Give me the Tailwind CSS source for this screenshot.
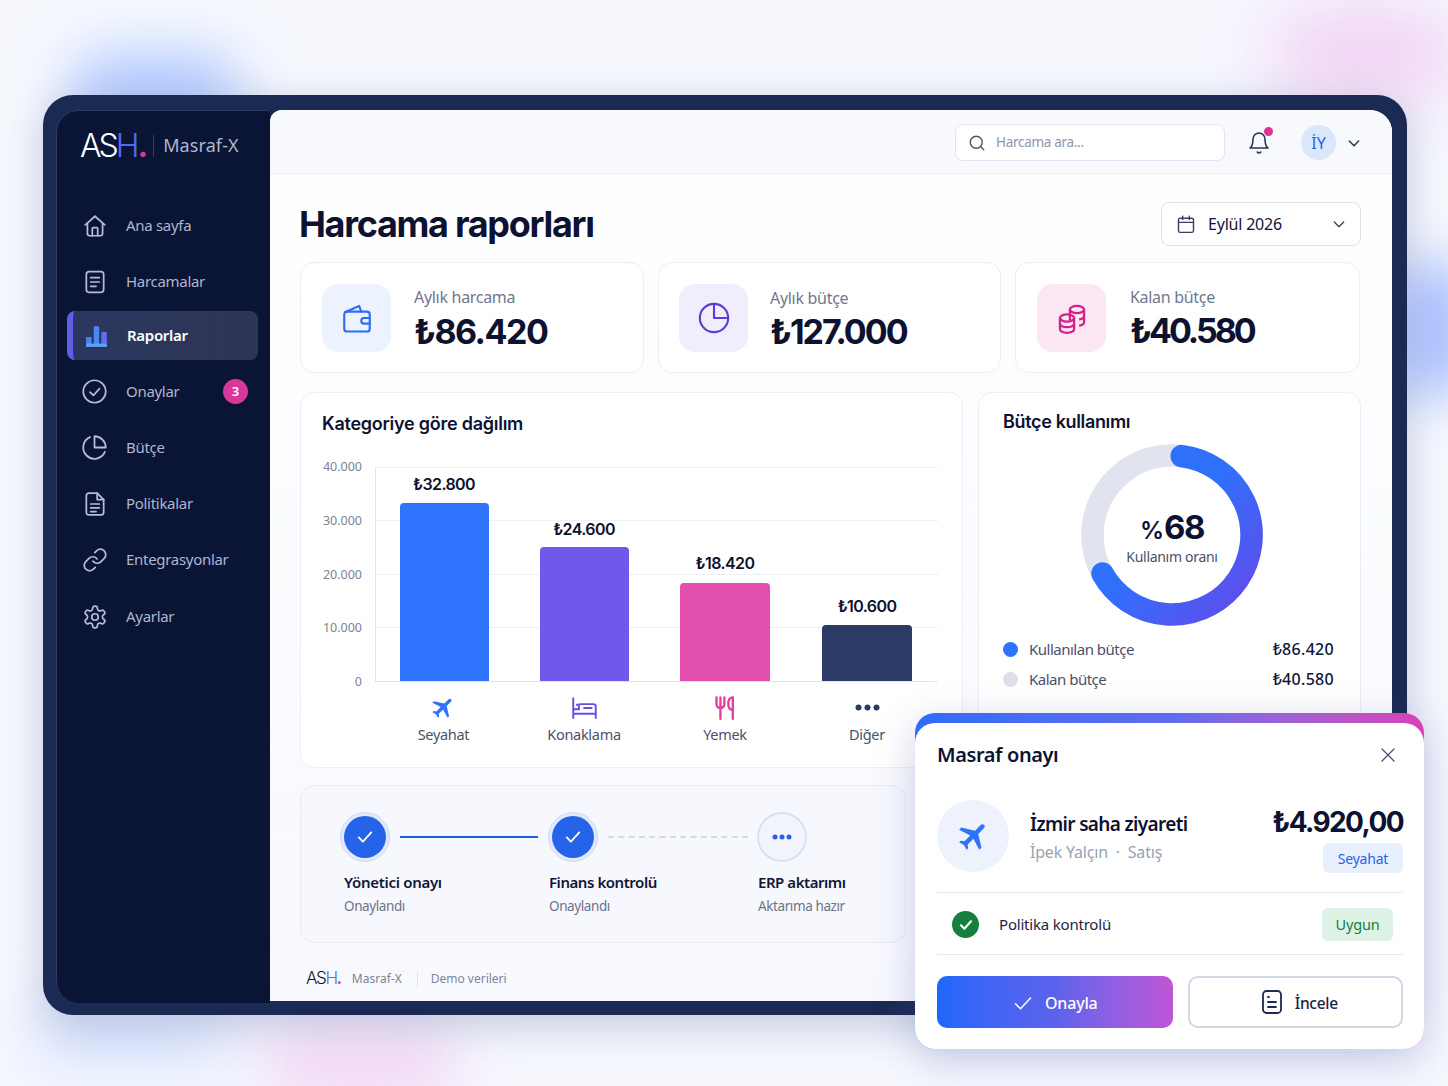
<!DOCTYPE html>
<html lang="tr">
<head>
    <meta charset="UTF-8">
    <title>Masraf-X Harcama raporları</title>
    <script src="https://cdn.jsdelivr.net/npm/@tailwindcss/browser@4"></script>
</head>
<body class="bg-[#f6f8fe] font-['Noto_Sans',sans-serif] text-[#0f1638]">
<div class="relative w-[1448px] h-[1086px] overflow-hidden pt-[95px] pl-[43px]">
    <!-- Background glow -->
    <div class="absolute left-[70px] top-[55px] w-[170px] h-[70px] rounded-full bg-[#8fb2ff]/70 blur-[28px]"></div>
    <div class="absolute left-[1270px] top-[10px] w-[190px] h-[90px] rounded-full bg-[#efb8ee]/60 blur-[35px]"></div>
    <div class="absolute left-[1390px] top-[260px] w-[90px] h-[140px] rounded-full bg-[#9db8ff]/80 blur-[25px]"></div>
    <div class="absolute left-[260px] top-[1030px] w-[200px] h-[70px] rounded-full bg-[#f0c0ee]/60 blur-[30px]"></div>
    <div class="absolute left-[30px] top-[1005px] w-[200px] h-[60px] rounded-full bg-[#aac4ff]/40 blur-[30px]"></div>

    <!-- App frame -->
    <div class="relative flex w-[1364px] h-[920px] rounded-[30px] bg-[#1b2a52] pt-[15px] pr-[15px] pb-[12px] pl-[13px] shadow-[0_10px_40px_rgba(40,60,130,0.25)]">

        <!-- Sidebar -->
        <aside class="w-[214px] shrink-0 rounded-l-[22px] bg-[#0a1434] border-l border-t border-[#2a3a66]">
            <div class="flex items-center h-[69px] pl-[23px]">
                <span class="font-['Inter',sans-serif] text-[32px] leading-none tracking-[-3px] font-light text-white">AS<span class="text-[#4f6cf5]">H</span><span class="ml-[1px] text-[#d9379a] font-bold">.</span></span>
                <span class="ml-[8px] w-px h-[22px] bg-[#34405f]"></span>
                <span class="ml-[9px] text-[18px] text-[#aeb6cf] tracking-[0.1px]">Masraf-X</span>
            </div>
            <nav class="flex flex-col gap-[7px] mt-[21px] pl-[10px] pr-[12px] text-[15px] text-[#aeb6d0]">
                <a class="flex items-center h-[49px] pl-[15px] gap-[18px]">
                    <svg class="w-[26px] h-[26px]" viewBox="0 0 24 24" fill="none" stroke="#b4bcd6" stroke-width="1.6" stroke-linejoin="round" stroke-linecap="round"><path d="M3 11l9-8 9 8"/><path d="M5 9.5V19a2 2 0 0 0 2 2h10a2 2 0 0 0 2-2V9.5"/><path d="M9.5 21v-6.5a1 1 0 0 1 1-1h3a1 1 0 0 1 1 1V21"/></svg>
                    <span class="tracking-[-0.3px]">Ana sayfa</span>
                </a>
                <a class="flex items-center h-[49px] pl-[15px] gap-[18px]">
                    <svg class="w-[26px] h-[26px]" viewBox="0 0 24 24" fill="none" stroke="#b4bcd6" stroke-width="1.6" stroke-linecap="round"><rect x="4" y="2.5" width="16" height="19" rx="2.5"/><path d="M8 8h8M8 12h8M8 16h5"/></svg>
                    <span class="tracking-[-0.3px]">Harcamalar</span>
                </a>
                <a class="flex items-center h-[49px] -mt-[2px] pl-[11px] gap-[17px] rounded-[8px] border-l-[6px] border-[#5f60ea] bg-gradient-to-r from-[#2b3760] to-[#2d3555] text-white font-semibold">
                    <svg class="w-[26px] h-[26px]" viewBox="0 0 24 24"><rect x="2" y="13" width="5" height="9" fill="#3f8bf5"/><rect x="9" y="3" width="5" height="19" rx="1" fill="#4a86f5"/><rect x="16" y="8" width="5" height="14" rx="1" fill="#5f6df0"/><rect x="2" y="19" width="19" height="3" fill="#65a0f8"/></svg>
                    <span class="tracking-[-0.3px]">Raporlar</span>
                </a>
                <a class="flex items-center h-[49px] pl-[14px] gap-[18px]">
                    <svg class="w-[27px] h-[27px]" viewBox="0 0 24 24" fill="none" stroke="#b4bcd6" stroke-width="1.5" stroke-linecap="round" stroke-linejoin="round"><circle cx="12" cy="12" r="10"/><path d="M8 12.5l3 3 5.5-6"/></svg>
                    <span class="tracking-[-0.3px]">Onaylar</span>
                    <span class="ml-auto mr-[10px] flex items-center justify-center w-[25px] h-[25px] rounded-full bg-[#d9379a] text-white text-[13px] font-semibold">3</span>
                </a>
                <a class="flex items-center h-[49px] pl-[14px] gap-[18px]">
                    <svg class="w-[27px] h-[27px]" viewBox="0 0 24 24" fill="none" stroke="#b4bcd6" stroke-width="1.6" stroke-linecap="round" stroke-linejoin="round"><path d="M21.21 15.89A10 10 0 1 1 8 2.83"/><path d="M22 12A10 10 0 0 0 12 2v10z"/></svg>
                    <span class="tracking-[-0.3px]">Bütçe</span>
                </a>
                <a class="flex items-center h-[49px] pl-[15px] gap-[18px]">
                    <svg class="w-[26px] h-[26px]" viewBox="0 0 24 24" fill="none" stroke="#b4bcd6" stroke-width="1.6" stroke-linecap="round" stroke-linejoin="round"><path d="M14 2H6.5A2.5 2.5 0 0 0 4 4.5v15A2.5 2.5 0 0 0 6.5 22h11a2.5 2.5 0 0 0 2.5-2.5V8z"/><path d="M14 2v6h6"/><path d="M8 12h8M8 15.5h8M8 19h5"/></svg>
                    <span class="tracking-[-0.3px]">Politikalar</span>
                </a>
                <a class="flex items-center h-[49px] pl-[15px] gap-[18px]">
                    <svg class="w-[26px] h-[26px]" viewBox="0 0 24 24" fill="none" stroke="#b4bcd6" stroke-width="1.6" stroke-linecap="round" stroke-linejoin="round"><path d="M10 13a5 5 0 0 0 7.54.54l3-3a5 5 0 0 0-7.07-7.07l-1.72 1.71"/><path d="M14 11a5 5 0 0 0-7.54-.54l-3 3a5 5 0 0 0 7.07 7.07l1.71-1.71"/></svg>
                    <span class="tracking-[-0.3px]">Entegrasyonlar</span>
                </a>
                <a class="flex items-center h-[49px] mt-[1px] pl-[15px] gap-[18px]">
                    <svg class="w-[26px] h-[26px]" viewBox="0 0 24 24" fill="none" stroke="#b4bcd6" stroke-width="1.6" stroke-linecap="round" stroke-linejoin="round"><path d="M12.22 2h-.44a2 2 0 0 0-2 2v.18a2 2 0 0 1-1 1.73l-.43.25a2 2 0 0 1-2 0l-.15-.08a2 2 0 0 0-2.73.73l-.22.38a2 2 0 0 0 .73 2.73l.15.1a2 2 0 0 1 1 1.72v.51a2 2 0 0 1-1 1.74l-.15.09a2 2 0 0 0-.73 2.73l.22.38a2 2 0 0 0 2.73.73l.15-.08a2 2 0 0 1 2 0l.43.25a2 2 0 0 1 1 1.73V20a2 2 0 0 0 2 2h.44a2 2 0 0 0 2-2v-.18a2 2 0 0 1 1-1.73l.43-.25a2 2 0 0 1 2 0l.15.08a2 2 0 0 0 2.73-.73l.22-.39a2 2 0 0 0-.73-2.73l-.15-.08a2 2 0 0 1-1-1.74v-.5a2 2 0 0 1 1-1.74l.15-.09a2 2 0 0 0 .73-2.73l-.22-.38a2 2 0 0 0-2.73-.73l-.15.08a2 2 0 0 1-2 0l-.43-.25a2 2 0 0 1-1-1.73V4a2 2 0 0 0-2-2z"/><circle cx="12" cy="12" r="3"/></svg>
                    <span class="tracking-[-0.3px]">Ayarlar</span>
                </a>
            </nav>
        </aside>

        <!-- Main panel -->
        <main class="flex-1 min-w-0 rounded-tl-[12px] rounded-tr-[22px] mb-[2px] bg-gradient-to-b from-white to-[#f8f9fe] overflow-hidden">
            <header class="flex items-center h-[64px] pt-[2px] pl-[685px] border-b border-[#e9ecf4] bg-[#f8f9fd]">
                <div class="flex items-center w-[270px] h-[37px] pl-[12px] gap-[10px] rounded-[8px] border border-[#e2e5ef] bg-white text-[13.5px] text-[#8f96ab] tracking-[-0.3px]">
                    <svg class="w-[18px] h-[18px]" viewBox="0 0 24 24" fill="none" stroke="#4b5268" stroke-width="1.8" stroke-linecap="round"><circle cx="11" cy="11" r="8"/><path d="M21 21l-4.3-4.3"/></svg>
                    Harcama ara...
                </div>
                <div class="relative ml-[22px] w-[24px] h-[24px]">
                    <svg class="w-[24px] h-[24px]" viewBox="0 0 24 24" fill="none" stroke="#2b3350" stroke-width="1.6" stroke-linecap="round" stroke-linejoin="round"><path d="M6 8a6 6 0 0 1 12 0c0 7 3 9 3 9H3s3-2 3-9"/><path d="M10.3 21a1.94 1.94 0 0 0 3.4 0"/></svg>
                    <span class="absolute right-[-2px] top-[-4px] w-[9px] h-[9px] rounded-full bg-[#e0338f]"></span>
                </div>
                <div class="ml-[30px] flex items-center justify-center w-[35px] h-[35px] rounded-full bg-[#dbe7fb] text-[#2563eb] text-[16px]">İY</div>
                <svg class="ml-[10px] w-[16px] h-[16px]" viewBox="0 0 24 24" fill="none" stroke="#2b3350" stroke-width="2.2" stroke-linecap="round" stroke-linejoin="round"><path d="M5 9l7 7 7-7"/></svg>
            </header>

            <div class="pl-[30px] pr-[31px]">
                <div class="flex items-center justify-between pt-[28px]">
                    <h1 class="-ml-[1px] font-['Inter',sans-serif] text-[36px] leading-[44px] font-bold tracking-[-1.3px] text-[#0d1230]">Harcama raporları</h1>
                    <div class="flex items-center w-[200px] h-[44px] pl-[14px] rounded-[8px] border border-[#d9deea] bg-white text-[16px] text-[#0f1638]">
                        <svg class="w-[20px] h-[20px]" viewBox="0 0 24 24" fill="none" stroke="#3a4260" stroke-width="1.7" stroke-linecap="round"><rect x="3" y="5" width="18" height="17" rx="2"/><path d="M3 10h18M8 2.5v4M16 2.5v4"/></svg>
                        <span class="ml-[12px] tracking-[-0.2px]">Eylül 2026</span>
                        <svg class="ml-auto mr-[13px] w-[16px] h-[16px]" viewBox="0 0 24 24" fill="none" stroke="#3a4260" stroke-width="2" stroke-linecap="round" stroke-linejoin="round"><path d="M5 9l7 7 7-7"/></svg>
                    </div>
                </div>

                <!-- Stat cards -->
                <div class="grid grid-cols-[344px_343px_345px] gap-[14px] mt-[16px]">
                    <div class="flex items-center h-[111px] pl-[21px] rounded-[14px] border border-[#eceef5] bg-white">
                        <div class="flex items-center justify-center w-[69px] h-[68px] rounded-[16px] bg-[#edf3fe]">
                            <svg class="w-[34px] h-[34px]" viewBox="0 0 24 24" fill="none" stroke="#2b6ef5" stroke-width="1.5" stroke-linecap="round" stroke-linejoin="round"><path d="M3 9.5a2 2 0 0 1 2-2h14a2 2 0 0 1 2 2v10a2 2 0 0 1-2 2H5a2 2 0 0 1-2-2z"/><path d="M3.5 8l10-4.5 1.5 4"/><path d="M21 12h-4a2 2 0 0 0 0 4h4"/></svg>
                        </div>
                        <div class="ml-[23px] mt-[5px]">
                            <div class="text-[16px] leading-[22px] text-[#71768f] tracking-[-0.3px]">Aylık harcama</div>
                            <div class="mt-[2px] font-['Inter',sans-serif] text-[34px] leading-[44px] font-bold tracking-[-1.5px] text-[#0d1230]">₺86.420</div>
                        </div>
                    </div>
                    <div class="flex items-center h-[111px] pl-[20px] rounded-[14px] border border-[#eceef5] bg-white">
                        <div class="flex items-center justify-center w-[69px] h-[68px] rounded-[16px] bg-[#f0eefc]">
                            <svg class="w-[34px] h-[34px]" viewBox="0 0 24 24" fill="none" stroke="#5f3bd8" stroke-width="1.5" stroke-linejoin="round"><circle cx="12" cy="12" r="10"/><path d="M12 2v10h10"/></svg>
                        </div>
                        <div class="ml-[22px] mt-[5px]">
                            <div class="text-[16px] leading-[22px] text-[#71768f] tracking-[-0.3px]">Aylık bütçe</div>
                            <div class="mt-[1px] font-['Inter',sans-serif] text-[34px] leading-[44px] font-bold tracking-[-2px] text-[#0d1230]">₺127.000</div>
                        </div>
                    </div>
                    <div class="flex items-center h-[111px] pl-[21px] rounded-[14px] border border-[#eceef5] bg-white">
                        <div class="flex items-center justify-center w-[69px] h-[68px] rounded-[16px] bg-[#fce6f3]">
                            <svg class="w-[34px] h-[34px]" viewBox="0 0 24 24" fill="none" stroke="#d0228a" stroke-width="1.6"><ellipse cx="15.5" cy="6" rx="5" ry="2.6"/><path d="M10.5 6v7.5M20.5 6v9c0 1-1 2-3.5 2.4M20.5 10.5c0 1-1 2-3.5 2.4"/><ellipse cx="8.5" cy="12" rx="5" ry="2.6"/><path d="M3.5 12v8c0 1.4 2.2 2.5 5 2.5s5-1.1 5-2.5v-8M3.5 16c0 1.4 2.2 2.5 5 2.5s5-1.1 5-2.5"/></svg>
                        </div>
                        <div class="ml-[24px] mt-[3px]">
                            <div class="text-[16px] leading-[22px] text-[#71768f] tracking-[-0.3px]">Kalan bütçe</div>
                            <div class="mt-[1px] font-['Inter',sans-serif] text-[34px] leading-[44px] font-bold tracking-[-3px] text-[#0d1230]">₺40.580</div>
                        </div>
                    </div>
                </div>

                <!-- Charts -->
                <div class="grid grid-cols-[663px_383px] gap-[15px] mt-[19px]">
                    <section class="h-[376px] pl-[21px] pt-[18px] rounded-[14px] border border-[#eceef5] bg-white">
                        <h2 class="font-['Inter',sans-serif] text-[18px] leading-[26px] font-semibold tracking-[-0.25px] text-[#0d1230]">Kategoriye göre dağılım</h2>
                        <div class="flex mt-[30px]">
                            <div class="flex flex-col justify-between items-end w-[40px] h-[231px] -mt-[8px] text-[12.5px] leading-[16px] text-[#7d8398]">
                                <span>40.000</span><span>30.000</span><span>20.000</span><span>10.000</span><span>0</span>
                            </div>
                            <div class="ml-[13px] w-[563px]">
                                <div class="relative h-[215px] border-l border-b border-[#dfe3ee]">
                                    <div class="absolute inset-0 flex flex-col justify-between">
                                        <div class="h-px bg-[#eef0f6]"></div><div class="h-px bg-[#eef0f6]"></div><div class="h-px bg-[#eef0f6]"></div><div class="h-px bg-[#eef0f6]"></div><div class="h-px"></div>
                                    </div>
                                    <div class="relative flex items-end h-full -ml-[2px] font-['Inter',sans-serif] text-[16px] leading-[22px] font-semibold tracking-[-0.6px] text-[#0d1230]">
                                        <div class="flex flex-col items-center w-[140px]"><span class="mb-[8px]">₺32.800</span><div class="w-[89px] h-[178px] rounded-t-[4px] bg-[#2f72fb]"></div></div>
                                        <div class="flex flex-col items-center w-[140px]"><span class="mb-[7px]">₺24.600</span><div class="w-[89px] h-[134px] rounded-t-[4px] bg-[#7058ea]"></div></div>
                                        <div class="flex flex-col items-center w-[142px]"><span class="mb-[9px]">₺18.420</span><div class="w-[90px] h-[98px] rounded-t-[4px] bg-[#e24fae]"></div></div>
                                        <div class="flex flex-col items-center w-[142px]"><span class="mb-[8px]">₺10.600</span><div class="w-[90px] h-[56px] rounded-t-[4px] bg-[#2c3a66]"></div></div>
                                    </div>
                                </div>
                                <div class="flex -ml-[1px] mt-[12px] text-[14.5px] leading-[20px] text-[#4b5168] tracking-[-0.3px]">
                                    <div class="flex flex-col items-center w-[140px] pr-[1px]">
                                        <svg class="w-[27px] h-[27px]" viewBox="0 0 24 24" fill="#2f72fb"><path transform="rotate(45 12 12)" d="M21 16v-2l-8-5V3.5c0-.83-.67-1.5-1.5-1.5S10 2.67 10 3.5V9l-8 5v2l8-2.5V19l-2 1.5V22l3.5-1 3.5 1v-1.5L13 19v-5.5l8 2.5z"/></svg>
                                        <span class="mt-[3px]">Seyahat</span>
                                    </div>
                                    <div class="flex flex-col items-center w-[140px]">
                                        <svg class="w-[27px] h-[27px]" viewBox="0 0 24 24" fill="none" stroke="#6450e0" stroke-width="1.7"><path d="M2 3v19M2 17.5h20M22 22v-11a2 2 0 0 0-2-2H8a1 1 0 0 0-1 1v3.5H2"/><path d="M4.500 9.500h2M11 12.500h8"/></svg>
                                        <span class="mt-[3px]">Konaklama</span>
                                    </div>
                                    <div class="flex flex-col items-center w-[142px]">
                                        <svg class="w-[27px] h-[27px]" viewBox="0 0 24 24" fill="none" stroke="#e0409f" stroke-width="2.1" stroke-linecap="round"><path d="M4 3v6a3.500 3.500 0 0 0 7 0V3M7.500 3v19"/><path d="M18 14c-2.500 0-3.500-2-3.500-5.500S16 3 18.500 3v19"/></svg>
                                        <span class="mt-[3px]">Yemek</span>
                                    </div>
                                    <div class="flex flex-col items-center w-[142px]">
                                        <svg class="w-[27px] h-[27px]" viewBox="0 0 27 27" fill="#2c3a66"><circle cx="4.500" cy="13.500" r="3"/><circle cx="13.500" cy="13.500" r="3"/><circle cx="22.500" cy="13.500" r="3"/></svg>
                                        <span class="mt-[3px]">Diğer</span>
                                    </div>
                                </div>
                            </div>
                        </div>
                    </section>

                    <section class="h-[376px] pl-[24px] pr-[26px] pt-[16px] rounded-[14px] border border-[#eceef5] bg-white">
                        <h2 class="font-['Inter',sans-serif] text-[18px] leading-[26px] font-semibold tracking-[-0.35px] text-[#0d1230]">Bütçe kullanımı</h2>
                        <div class="relative w-[182px] h-[182px] ml-[78px] mt-[9px]">
                            <svg class="w-[182px] h-[182px]" viewBox="0 0 182 182" fill="none">
                                <defs><linearGradient id="donut" x1="0" y1="0" x2="1" y2="1"><stop offset="0.45" stop-color="#2f70fb"/><stop offset="0.9" stop-color="#5b50ee"/></linearGradient></defs>
                                <circle cx="91" cy="91" r="79.5" stroke="#e1e4ee" stroke-width="22.500"/>
                                <path d="M100.7 12.100A79.500 79.500 0 1 1 21.500 129.500" stroke="url(#donut)" stroke-width="22.500" stroke-linecap="round"/>
                            </svg>
                            <div class="absolute inset-0 flex flex-col items-center justify-center">
                                <div class="mt-[6px] font-['Inter',sans-serif] font-bold text-[#0d1230] leading-[34px]"><span class="text-[24px] font-semibold">%</span><span class="text-[33px] tracking-[-1.5px]">68</span></div>
                                <div class="-mt-[3px] text-[14px] leading-[20px] text-[#4b5168] tracking-[-0.3px]">Kullanım oranı</div>
                            </div>
                        </div>
                        <div class="flex items-center mt-[8px] h-[30px] text-[15px] text-[#4b5168] tracking-[-0.5px]">
                            <span class="w-[15px] h-[15px] rounded-full bg-[#2f72fb]"></span>
                            <span class="ml-[11px]">Kullanılan bütçe</span>
                            <span class="ml-auto text-[16px] font-medium tracking-[0.3px] text-[#0f1638]">₺86.420</span>
                        </div>
                        <div class="flex items-center h-[30px] text-[15px] text-[#4b5168] tracking-[-0.5px]">
                            <span class="w-[15px] h-[15px] rounded-full bg-[#dde0ea]"></span>
                            <span class="ml-[11px]">Kalan bütçe</span>
                            <span class="ml-auto text-[16px] font-medium tracking-[0.3px] text-[#0f1638]">₺40.580</span>
                        </div>
                    </section>
                </div>

                <!-- Approval steps -->
                <section class="w-[606px] h-[158px] mt-[17px] pt-[26px] pl-[39px] rounded-[14px] border border-[#e9ecf4] bg-[#f7f8fd]">
                    <div class="flex items-center">
                        <div class="flex items-center justify-center w-[50px] h-[50px] rounded-full bg-[#e3e9f9] border border-[#cfd9f4]">
                            <div class="flex items-center justify-center w-[42px] h-[42px] rounded-full bg-[#2563eb]">
                                <svg class="w-[20px] h-[20px]" viewBox="0 0 24 24" fill="none" stroke="white" stroke-width="2.2" stroke-linecap="round" stroke-linejoin="round"><path d="M4.500 12.500l5 5 10-11"/></svg>
                            </div>
                        </div>
                        <div class="ml-[10px] w-[138px] h-[2px] bg-[#1f5ed8]"></div>
                        <div class="ml-[10px] flex items-center justify-center w-[50px] h-[50px] rounded-full bg-[#e3e9f9] border border-[#cfd9f4]">
                            <div class="flex items-center justify-center w-[42px] h-[42px] rounded-full bg-[#2563eb]">
                                <svg class="w-[20px] h-[20px]" viewBox="0 0 24 24" fill="none" stroke="white" stroke-width="2.2" stroke-linecap="round" stroke-linejoin="round"><path d="M4.500 12.500l5 5 10-11"/></svg>
                            </div>
                        </div>
                        <div class="ml-[10px] w-[140px] border-t-2 border-dashed border-[#d5d9e6]"></div>
                        <div class="ml-[9px] flex items-center justify-center w-[50px] h-[50px] rounded-full bg-[#f1f4fd] border-2 border-[#d8e0f5]">
                            <svg class="w-[22px] h-[8px]" viewBox="0 0 22 8" fill="#2563eb"><circle cx="4" cy="4" r="2.500"/><circle cx="11" cy="4" r="2.500"/><circle cx="18" cy="4" r="2.500"/></svg>
                        </div>
                    </div>
                    <div class="flex mt-[9px]">
                        <div class="w-[209px] pl-[4px]">
                            <div class="text-[15px] leading-[22px] font-semibold tracking-[-0.3px]">Yönetici onayı</div>
                            <div class="mt-[3px] text-[13.5px] leading-[20px] text-[#6d7288] tracking-[-0.4px]">Onaylandı</div>
                        </div>
                        <div class="w-[209px]">
                            <div class="text-[15px] leading-[22px] font-semibold tracking-[-0.45px]">Finans kontrolü</div>
                            <div class="mt-[3px] text-[13.5px] leading-[20px] text-[#6d7288] tracking-[-0.4px]">Onaylandı</div>
                        </div>
                        <div>
                            <div class="text-[15px] leading-[22px] font-semibold tracking-[-0.45px]">ERP aktarımı</div>
                            <div class="mt-[3px] text-[13.5px] leading-[20px] text-[#6d7288] tracking-[-0.4px]">Aktarıma hazır</div>
                        </div>
                    </div>
                </section>

                <footer class="flex items-center mt-[24px] pl-[6px] h-[24px] text-[12px] text-[#7d8398]">
                    <span class="font-['Inter',sans-serif] text-[17px] font-light tracking-[-1.4px] text-[#0d1230]">AS<span class="text-[#4f6cf5]">H</span><span class="text-[#d9379a] font-bold">.</span></span>
                    <span class="ml-[11px]">Masraf-X</span>
                    <span class="ml-[15px] w-px h-[16px] bg-[#dfe3ee]"></span>
                    <span class="ml-[13px]">Demo verileri</span>
                </footer>
            </div>
        </main>
    </div>

    <!-- Approval popup -->
    <div class="absolute left-[915px] top-[713px] w-[509px] h-[336px] rounded-[20px] bg-gradient-to-r from-[#2f6cf6] via-[#5f6cf0] to-[#d83fb4] pt-[10px] shadow-[0_12px_40px_rgba(60,70,160,0.25)]">
        <div class="h-full rounded-[20px] bg-white pl-[22px] pr-[21px] pt-[19px]">
            <div class="flex items-center justify-between h-[26px]">
                <h3 class="text-[20px] font-semibold tracking-[-0.4px] text-[#0d1230]">Masraf onayı</h3>
                <svg class="mr-[6px] w-[18px] h-[18px]" viewBox="0 0 24 24" fill="none" stroke="#4b5268" stroke-width="1.7" stroke-linecap="round"><path d="M4 4l16 16M20 4L4 20"/></svg>
            </div>
            <div class="flex items-start mt-[32px]">
                <div class="flex items-center justify-center w-[72px] h-[72px] pl-[2px] rounded-full bg-[#edf2fc]">
                    <svg class="w-[36px] h-[36px]" viewBox="0 0 24 24" fill="#2f72fb"><path transform="rotate(45 12 12)" d="M21 16v-2l-8-5V3.5c0-.83-.67-1.5-1.5-1.5S10 2.67 10 3.5V9l-8 5v2l8-2.5V19l-2 1.5V22l3.5-1 3.5 1v-1.500L13 19v-5.500l8 2.500z"/></svg>
                </div>
                <div class="ml-[21px] mt-[9px]">
                    <div class="text-[19px] leading-[30px] font-semibold tracking-[-0.65px] text-[#0d1230]">İzmir saha ziyareti</div>
                    <div class="mt-[1px] text-[16px] leading-[24px] text-[#9aa0b5] tracking-[-0.2px]">İpek Yalçın &nbsp;·&nbsp; Satış</div>
                </div>
                <div class="ml-auto flex flex-col items-end">
                    <div class="font-['Inter',sans-serif] text-[28px] leading-[44px] font-bold tracking-[-1.6px] text-[#0d1230]">₺4.920,00</div>
                    <div class="-mt-[1px] flex items-center justify-center w-[80px] h-[30px] rounded-[6px] bg-[#e8f0fe] text-[14px] text-[#2563eb] tracking-[-0.2px]">Seyahat</div>
                </div>
            </div>
            <div class="flex items-center h-[63px] mt-[19px] pt-[2px] pl-[15px] pr-[10px] border-y border-[#e6e9f1]">
                <span class="flex items-center justify-center w-[27px] h-[27px] rounded-full bg-[#15803d]">
                    <svg class="w-[16px] h-[16px]" viewBox="0 0 24 24" fill="none" stroke="white" stroke-width="3.200" stroke-linecap="round" stroke-linejoin="round"><path d="M4.500 12.500l5 5 10-11"/></svg>
                </span>
                <span class="ml-[20px] text-[15px] tracking-[-0.2px] text-[#1c2347]">Politika kontrolü</span>
                <span class="ml-auto flex items-center justify-center w-[71px] h-[33px] rounded-[6px] bg-[#dff2e6] text-[14.5px] text-[#15803d] tracking-[-0.2px]">Uygun</span>
            </div>
            <div class="flex gap-[15px] mt-[21px]">
                <button class="flex items-center justify-center gap-[12px] w-[237px] h-[52px] pt-[1px] rounded-[10px] bg-gradient-to-r from-[#1c67fb] via-[#5b62ec] to-[#bd55d6] text-white text-[16px] font-medium tracking-[-0.2px]">
                    <svg class="w-[20px] h-[20px]" viewBox="0 0 24 24" fill="none" stroke="white" stroke-width="1.8" stroke-linecap="round" stroke-linejoin="round"><path d="M3 13l6 6L21 6"/></svg>
                    Onayla
                </button>
                <button class="flex items-center justify-center gap-[11px] w-[215px] pl-[6px] h-[52px] rounded-[10px] border-2 border-[#d2d7e6] bg-white text-[15.5px] font-medium tracking-[-0.3px] text-[#1c2347]">
                    <svg class="w-[24px] h-[26px]" viewBox="0 0 24 26" fill="none" stroke="#1f2a52" stroke-width="1.800" stroke-linecap="round"><rect x="3" y="2" width="18" height="22" rx="3.500"/><path d="M8 8h1M8 13h8M8 18h8"/></svg>
                    <span class="pt-[4px]">İncele</span>
                </button>
            </div>
        </div>
    </div>
</div>
</body>
</html>
